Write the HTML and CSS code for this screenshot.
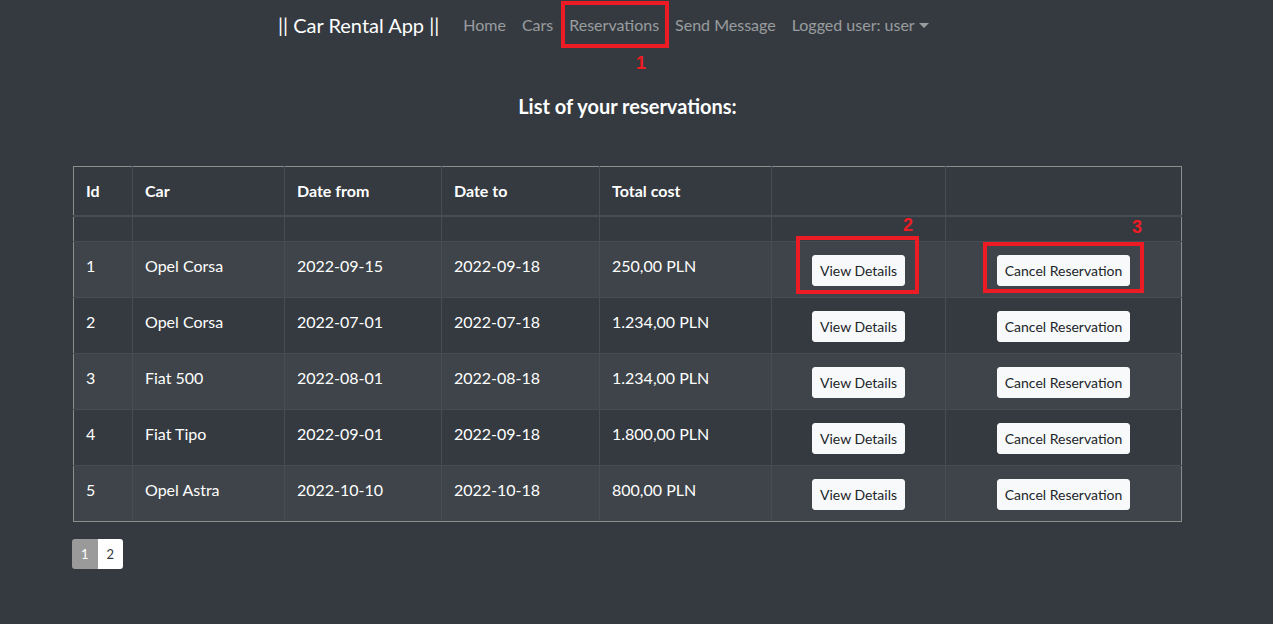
FILE: index.html
```html
<!DOCTYPE html>
<html lang="en">
<head>
<meta charset="utf-8">
<title>Car Rental App</title>
<link rel="stylesheet" href="styles.css">
</head>
<body>
<nav class="navbar">
  <a class="brand" href="#">|| Car Rental App ||</a>
  <ul class="nav">
    <li><a class="nav-link" href="#">Home</a></li>
    <li><a class="nav-link" href="#">Cars</a></li>
    <li><a class="nav-link" href="#">Reservations</a></li>
    <li><a class="nav-link" href="#">Send Message</a></li>
    <li><a class="nav-link dropdown" href="#">Logged user: user <span class="caret"></span></a></li>
  </ul>
</nav>

<main class="content">
  <h5 class="title">List of your reservations:</h5>

  <table class="table">
    <thead>
      <tr class="head-row">
        <th class="c-id">Id</th>
        <th class="c-car">Car</th>
        <th class="c-from">Date from</th>
        <th class="c-to">Date to</th>
        <th class="c-cost">Total cost</th>
        <th class="c-view"></th>
        <th class="c-cancel"></th>
      </tr>
      <tr class="spacer-row">
        <td></td><td></td><td></td><td></td><td></td><td></td><td></td>
      </tr>
    </thead>
    <tbody>
      <tr>
        <td>1</td><td>Opel Corsa</td><td>2022-09-15</td><td>2022-09-18</td><td>250,00 PLN</td>
        <td class="act"><button class="btn">View Details</button></td>
        <td class="act"><button class="btn">Cancel Reservation</button></td>
      </tr>
      <tr>
        <td>2</td><td>Opel Corsa</td><td>2022-07-01</td><td>2022-07-18</td><td>1.234,00 PLN</td>
        <td class="act"><button class="btn">View Details</button></td>
        <td class="act"><button class="btn">Cancel Reservation</button></td>
      </tr>
      <tr>
        <td>3</td><td>Fiat 500</td><td>2022-08-01</td><td>2022-08-18</td><td>1.234,00 PLN</td>
        <td class="act"><button class="btn">View Details</button></td>
        <td class="act"><button class="btn">Cancel Reservation</button></td>
      </tr>
      <tr>
        <td>4</td><td>Fiat Tipo</td><td>2022-09-01</td><td>2022-09-18</td><td>1.800,00 PLN</td>
        <td class="act"><button class="btn">View Details</button></td>
        <td class="act"><button class="btn">Cancel Reservation</button></td>
      </tr>
      <tr>
        <td>5</td><td>Opel Astra</td><td>2022-10-10</td><td>2022-10-18</td><td>800,00 PLN</td>
        <td class="act"><button class="btn">View Details</button></td>
        <td class="act"><button class="btn">Cancel Reservation</button></td>
      </tr>
    </tbody>
  </table>

  <ul class="pagination">
    <li class="page active">1</li>
    <li class="page">2</li>
  </ul>
</main>

<div class="mark mark-1"></div>
<div class="num num-1">1</div>
<div class="mark mark-2"></div>
<div class="num num-2">2</div>
<div class="mark mark-3"></div>
<div class="num num-3">3</div>
</body>
</html>
```

FILE: styles.css
```css
* { box-sizing: border-box; }

html, body {
  margin: 0;
  padding: 0;
  background: #343a40;
  color: #fff;
  font-family: Lato, "Open Sans", sans-serif;
  font-size: 16px;
  line-height: 1.5;
  height: 100%;
  overflow: hidden;
}

.navbar {
  display: flex;
  align-items: center;
  padding: 7px 16px 9px 278px;
  height: 52px;
}

.brand {
  color: #fff;
  text-decoration: none;
  font-size: 20px;
  line-height: 30px;
  margin-right: 16px;
}

.nav {
  display: flex;
  list-style: none;
  margin: 0;
  padding: 0;
}

.nav-link {
  display: block;
  padding: 8px;
  color: rgba(255, 255, 255, 0.5);
  text-decoration: none;
}

.caret {
  display: inline-block;
  vertical-align: 3px;
  margin-left: 1px;
  border-top: 5px solid rgba(255, 255, 255, 0.5);
  border-left: 5px solid transparent;
  border-right: 5px solid transparent;
}

.content {
  padding: 0 91px 0 73px;
}

.title {
  margin: 42px 0 48px;
  text-align: center;
  font-size: 20px;
  font-weight: 700;
  line-height: 1.2;
}

.table {
  width: 1109px;
  border-collapse: collapse;
  border: 1px solid #8d8d8d;
  color: #fff;
}

.table th,
.table td {
  padding: 12px;
  border: 1px solid #454d55;
  text-align: left;
  vertical-align: top;
  font-weight: 400;
}

.table th {
  font-weight: 700;
  border-bottom: 2px solid #454d55;
}

.head-row th { height: 49px; border-top-color: #8d8d8d; }
.spacer-row td { height: 25px; padding: 0; }

.c-id { width: 59px; }
.c-car { width: 152px; }
.c-from { width: 157px; }
.c-to { width: 158px; }
.c-cost { width: 172px; }
.c-view { width: 174px; }
.c-cancel { width: 236px; }

.table tbody tr:nth-of-type(odd) { background: rgba(255, 255, 255, 0.05); }
.table tbody td { height: 56px; padding-bottom: 11px; }
.table tr > :first-child { border-left-color: #8d8d8d; }
.table tr > :last-child { border-right-color: #8d8d8d; }
.table tbody tr:last-child td { border-bottom-color: #8d8d8d; }

.act { text-align: center !important; }

.btn {
  font-family: inherit;
  font-size: 14px;
  line-height: 21px;
  padding: 4px 7px;
  color: #212529;
  background: #f8f9fa;
  border: 1px solid #f8f9fa;
  border-radius: 3px;
  margin-top: 1px;
}

.pagination {
  display: flex;
  list-style: none;
  margin: 17px 0 0 -1px;
  padding: 0;
}

.page {
  padding: 4px 9px;
  font-size: 13px;
  line-height: 22px;
  background: #fff;
  color: #343a40;
}
.page:first-child { border-radius: 3px 0 0 3px; }
.page:last-child { border-radius: 0 3px 3px 0; }
.page.active { background: #9a9a9a; color: #fff; }

.mark {
  position: absolute;
  border: 4px solid #ed1c24;
}
.mark-1 { left: 561px; top: 1px; width: 108px; height: 47px; }
.mark-2 { left: 796px; top: 236px; width: 123px; height: 58px; }
.mark-3 { left: 983px; top: 242px; width: 161px; height: 51px; }

.num {
  position: absolute;
  color: #ed1c24;
  font-family: "Liberation Sans", Arial, sans-serif;
  font-weight: 700;
  font-size: 18px;
  line-height: 18px;
}
.num-1 { left: 636px; top: 54px; }
.num-2 { left: 903px; top: 216px; }
.num-3 { left: 1132px; top: 218px; }
```
